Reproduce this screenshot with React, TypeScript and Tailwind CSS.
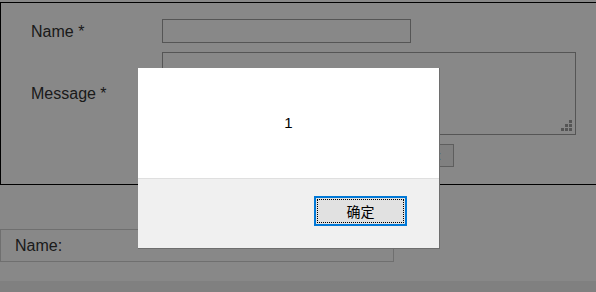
import React from 'react';

export default function App() {
  return (
    <div className="relative h-[292px] w-[596px] overflow-hidden bg-white text-[#333] font-['Liberation_Sans',Arial,sans-serif]">
      {/* form */}
      <div className="mt-[2px] w-[620px] border-t border-b border-l border-black pl-[30px] pt-[16px] pb-[17px]">
        <div className="grid grid-cols-[131px_1fr] items-center gap-y-[9px]">
          <label className="pt-[2px] text-[16px] leading-[20px]">Name *</label>
          <input className="h-[24px] w-[249px] border border-[#a0a0a0] bg-white outline-none" />

          <label className="pt-[1px] text-[16px] leading-[20px]">Message *</label>
          <div className="relative h-[83px] w-[414px] border border-[#a0a0a0] bg-white">
            <svg className="absolute right-[3px] bottom-[3px]" width="11" height="11" viewBox="0 0 11 11">
              <rect x="8" y="0" width="3" height="3" fill="#9f9f9f" />
              <rect x="4" y="4" width="3" height="3" fill="#9f9f9f" />
              <rect x="8" y="4" width="3" height="3" fill="#9f9f9f" />
              <rect x="0" y="8" width="3" height="3" fill="#9f9f9f" />
              <rect x="4" y="8" width="3" height="3" fill="#9f9f9f" />
              <rect x="8" y="8" width="3" height="3" fill="#9f9f9f" />
            </svg>
          </div>

          <div />
          <button className="ml-[222px] h-[23px] w-[70px] border border-[#b0b0b0] bg-[#f0f0f0] pr-[12px] text-right text-[13px] text-[#0a2a5a]">
            提交 :
          </button>
        </div>
      </div>

      <div className="mt-[44px] flex h-[33px] w-[394px] items-center border border-[#d0d0d0] pl-[14px] text-[16px]">
        Name:
      </div>

      <div className="mt-[19px] h-[20px] bg-[#f0f0f0]" />

      {/* overlay */}
      <div className="absolute inset-0 bg-[rgba(0,0,0,0.467)]" />

      {/* alert dialog */}
      <div className="absolute left-[138px] top-[68px] flex h-[181px] w-[302px] flex-col border-r border-b border-[#6e6e6e] bg-white">
        <div className="flex h-[110px] items-center justify-center text-[15px] text-black">
          1
        </div>
        <div className="flex flex-1 justify-end border-t border-[#dfdfdf] bg-[#f0f0f0] pt-[17px] pr-[32px]">
          <button className="h-[30px] w-[93px] border-2 border-[#0078d7] bg-[#e1e1e1] p-[1px]">
            <div className="flex h-full w-full items-center justify-center border border-dotted border-black text-[14px] text-black font-['Noto_Sans_CJK_SC',sans-serif]">
              确定
            </div>
          </button>
        </div>
      </div>
    </div>
  );
}
